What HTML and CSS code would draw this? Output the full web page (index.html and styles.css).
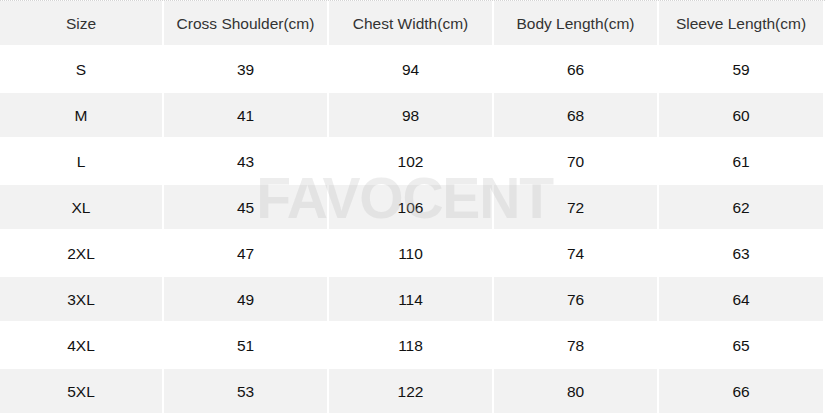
FILE: index.html
```html
<!DOCTYPE html>
<html>
<head>
<meta charset="utf-8">
<link rel="stylesheet" href="styles.css">
</head>
<body>
<div class="page">
  <div class="table">
    <div class="row head"><div>Size</div><div>Cross Shoulder(cm)</div><div>Chest Width(cm)</div><div>Body Length(cm)</div><div>Sleeve Length(cm)</div></div>
    <div class="row"><div>S</div><div>39</div><div>94</div><div>66</div><div>59</div></div>
    <div class="row alt"><div>M</div><div>41</div><div>98</div><div>68</div><div>60</div></div>
    <div class="row"><div>L</div><div>43</div><div>102</div><div>70</div><div>61</div></div>
    <div class="row alt"><div>XL</div><div>45</div><div>106</div><div>72</div><div>62</div></div>
    <div class="row"><div>2XL</div><div>47</div><div>110</div><div>74</div><div>63</div></div>
    <div class="row alt"><div>3XL</div><div>49</div><div>114</div><div>76</div><div>64</div></div>
    <div class="row"><div>4XL</div><div>51</div><div>118</div><div>78</div><div>65</div></div>
    <div class="row alt"><div>5XL</div><div>53</div><div>122</div><div>80</div><div>66</div></div>
  </div>
  <div class="watermark">FAVOCENT</div>
</div>
</body>
</html>
```

FILE: styles.css
```css
html, body {
  margin: 0;
  padding: 0;
  background: #fff;
}
.page {
  position: relative;
  width: 825px;
  height: 413px;
  overflow: hidden;
  border-top: 1px dotted #d4d4d4;
  box-sizing: border-box;
  font-family: "Liberation Sans", Arial, sans-serif;
  font-size: 15.5px;
}
.table {
  width: 823px;
  display: flex;
  flex-direction: column;
  gap: 2px;
}
.row {
  display: grid;
  grid-template-columns: 162px 163px 163px 163px 1fr;
  column-gap: 2px;
  height: 44px;
}
.row > div {
  display: flex;
  align-items: center;
  justify-content: center;
  padding-top: 2px;
  box-sizing: border-box;
  color: #111;
}
.row.head > div, .row.alt > div {
  background: #f2f2f2;
}
.row.head > div {
  color: #333;
}
.watermark {
  position: absolute;
  left: 0;
  right: 0;
  top: 169px;
  line-height: 1;
  text-align: center;
  padding-right: 16px;
  font-family: "Liberation Sans", Arial, sans-serif;
  font-weight: bold;
  font-size: 57px;
  letter-spacing: -1.2px;
  color: rgba(190, 190, 190, 0.28);
  pointer-events: none;
}
```
